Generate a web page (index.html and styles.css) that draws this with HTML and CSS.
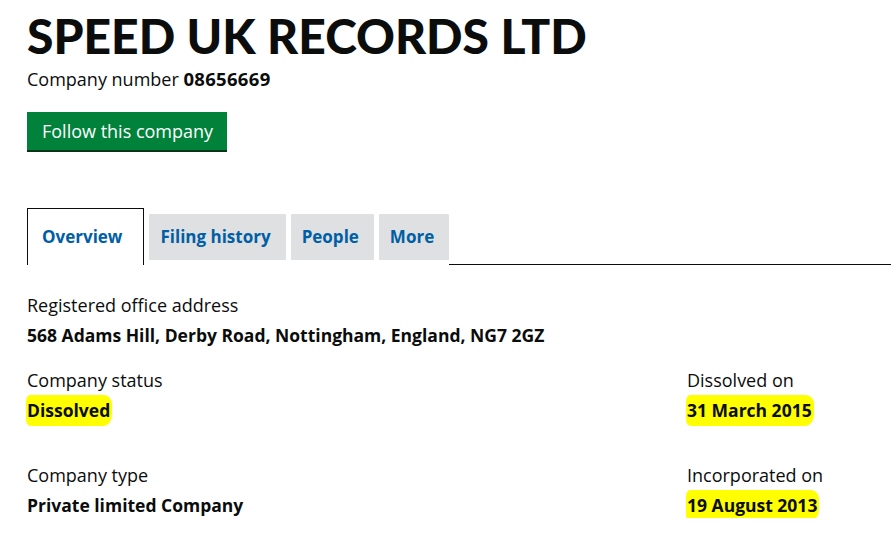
FILE: index.html
```html
<!DOCTYPE html>
<html>
<head>
<meta charset="utf-8">
<link rel="stylesheet" href="styles.css">
</head>
<body>
<div class="page">
  <h1 class="title">SPEED UK RECORDS LTD</h1>
  <p class="number">Company number <strong>08656669</strong></p>
  <a class="follow" href="#">Follow this company</a>

  <div class="tabs">
    <span class="tab active">Overview</span>
    <span class="tab">Filing history</span>
    <span class="tab">People</span>
    <span class="tab">More</span>
    <span class="tab-rest"></span>
  </div>

  <dl class="block">
    <dt>Registered office address</dt>
    <dd>568 Adams Hill, Derby Road, Nottingham, England, NG7 2GZ</dd>
  </dl>

  <div class="row">
    <dl class="block">
      <dt>Company status</dt>
      <dd><span class="hl hl-a">Dissolved</span></dd>
    </dl>
    <dl class="block right">
      <dt>Dissolved on</dt>
      <dd><span class="hl hl-b">31 March 2015</span></dd>
    </dl>
  </div>

  <div class="row">
    <dl class="block">
      <dt>Company type</dt>
      <dd>Private limited Company</dd>
    </dl>
    <dl class="block right">
      <dt>Incorporated on</dt>
      <dd><span class="hl hl-c">19 August 2013</span></dd>
    </dl>
  </div>
</div>
</body>
</html>
```

FILE: styles.css
```css
html, body { margin: 0; padding: 0; background: #fff; }
body {
  font-family: "Open Sans", Lato, sans-serif;
  color: #0b0c0c;
  overflow: hidden;
}
.page { padding: 0 0 0 27px; }
.title {
  margin: 0;
  padding-top: 12px;
  font-family: Lato, sans-serif;
  font-size: 48px;
  line-height: 48px;
  font-weight: 900;
  letter-spacing: 0;
}
.number {
  margin: 7px 0 0;
  font-size: 18px;
  line-height: 24px;
}
.number strong { font-weight: 700; font-size: 18.5px; letter-spacing: 0.3px; }
.follow {
  display: inline-block;
  margin-top: 21px;
  background: #00823b;
  color: #fff;
  text-decoration: none;
  font-size: 18px;
  line-height: 38px;
  height: 38px;
  padding: 0 14px 0 15px;
  border-bottom: 2px solid #003618;
}
.tabs {
  display: flex;
  align-items: flex-end;
  margin-top: 56px;
  gap: 5px;
}
.tab {
  display: block;
  background: #dee0e2;
  color: #005ea5;
  font-weight: 700;
  font-size: 17px;
  line-height: 46px;
  padding: 0 15px 0 11px;
  margin-bottom: 5px;
  border-radius: 1px;
}
.tab.active {
  background: #fff;
  border: 1px solid #0b0c0c;
  border-bottom: none;
  border-radius: 0;
  line-height: 56px;
  padding: 0 21px 0 14px;
  margin-bottom: 0;
}
.tab-rest {
  flex: 1;
  border-bottom: 1px solid #0b0c0c;
  margin-left: -5px;
  align-self: flex-end;
}
.block { margin: 0; }
.tabs + .block { margin-top: 27px; }
dt { font-size: 18px; line-height: 26px; }
dd { margin: 4px 0 0; font-size: 17.5px; line-height: 26px; font-weight: 700; }
.row { display: flex; margin-top: 19px; }
.row + .row { margin-top: 39px; }
.row .block:first-child { width: 660px; }
.hl {
  background: #ffff00;
  padding: 3px 2px 4px 1px;
  margin-left: -1px;
  border-radius: 4px 8px 9px 5px / 7px 9px 11px 6px;
}
```
